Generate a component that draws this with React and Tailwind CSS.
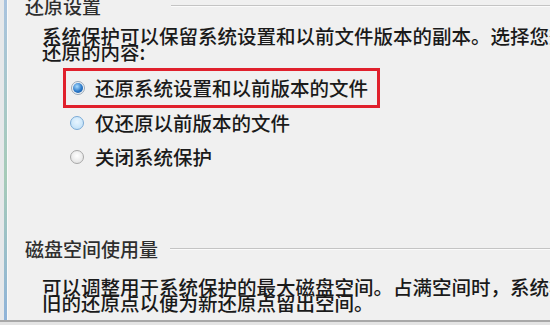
import React from "react";

const font = { fontFamily: '"Noto Sans CJK SC", "Noto Sans", sans-serif' };

function Radio({ kind }) {
  if (kind === "on") {
    return (
      <span className="w-[14px] h-[14px] rounded-full border border-[#9aa8b6] bg-[#eef2f6] flex items-center justify-center shrink-0">
        <span className="w-[10px] h-[10px] rounded-full bg-[radial-gradient(circle_at_40%_35%,#a8dcff,#2a78c8_55%,#144f92)]" />
      </span>
    );
  }
  if (kind === "hover") {
    return (
      <span className="w-[14px] h-[14px] rounded-full border border-[#7aaad6] bg-[radial-gradient(circle_at_50%_40%,#e8f5ff,#b8dcf6)] shrink-0" />
    );
  }
  return (
    <span className="w-[14px] h-[14px] rounded-full border border-[#a8a8a8] bg-[radial-gradient(circle_at_50%_40%,#ffffff,#dcdcdc)] shrink-0" />
  );
}

function GroupTitle({ text, gap }) {
  return (
    <div className="flex items-center h-[16px] leading-[16px] text-[19px] text-[#2e2e2e] whitespace-nowrap">
      <span className="shrink-0">{text}</span>
      <div className={`flex-1 ${gap} flex flex-col`}>
        <div className="h-px bg-[#c4c4c4]" />
        <div className="h-px bg-[#fbfbfb]" />
      </div>
    </div>
  );
}

export default function App() {
  return (
    <div className="w-[550px] h-[325px] bg-[#f0f0f0] overflow-hidden flex flex-col" style={font}>
      <div className="flex h-[322px] border-b-2 border-[#a8a8a8] shrink-0">
        {/* left window edge */}
        <div className="w-[4px] shrink-0 bg-[#e6e8ea]" />
        <div className="w-[3px] shrink-0 bg-[linear-gradient(to_bottom,#a9c3df,#a6cbb8_55%,#8fb3d9)]" />
        <div className="w-[1px] shrink-0 bg-[#fafafa]" />

        <div className="flex-1 min-w-0 flex flex-col pl-[17px] text-[#1a1a1a] font-medium overflow-hidden">
          <div className="-mt-[2px]">
            <GroupTitle text="还原设置" gap="ml-[70px]" />
          </div>

          <div className="mt-[14px] pl-[17px] text-[19.5px] leading-[16px] whitespace-nowrap">
            <div>系统保护可以保留系统设置和以前文件版本的副本。选择您想要</div>
            <div>还原的内容:</div>
          </div>

          <div className="mt-[8px] ml-[38px] w-[317px] h-[40px] border-[3px] border-[#e0202c] flex items-center pl-[5px] gap-[10px] text-[19.5px] leading-[16px] whitespace-nowrap">
            <Radio kind="on" />
            <span>还原系统设置和以前版本的文件</span>
          </div>

          <div className="mt-[5px] ml-[45px] h-[20px] flex items-center gap-[11px] text-[19.5px] leading-[16px] whitespace-nowrap">
            <Radio kind="hover" />
            <span>仅还原以前版本的文件</span>
          </div>

          <div className="mt-[14px] ml-[45px] h-[20px] flex items-center gap-[11px] text-[19.5px] leading-[16px] whitespace-nowrap">
            <Radio kind="off" />
            <span>关闭系统保护</span>
          </div>

          <div className="mt-[74px]">
            <GroupTitle text="磁盘空间使用量" gap="ml-[12px]" />
          </div>

          <div className="mt-[22px] pl-[17px] text-[19.5px] leading-[16px] whitespace-nowrap">
            <div>可以调整用于系统保护的最大磁盘空间。占满空间时，系统将删除较</div>
            <div>旧的还原点以便为新还原点留出空间。</div>
          </div>
        </div>
      </div>
      <div className="flex-1 bg-[#e4e4e4]" />
    </div>
  );
}
